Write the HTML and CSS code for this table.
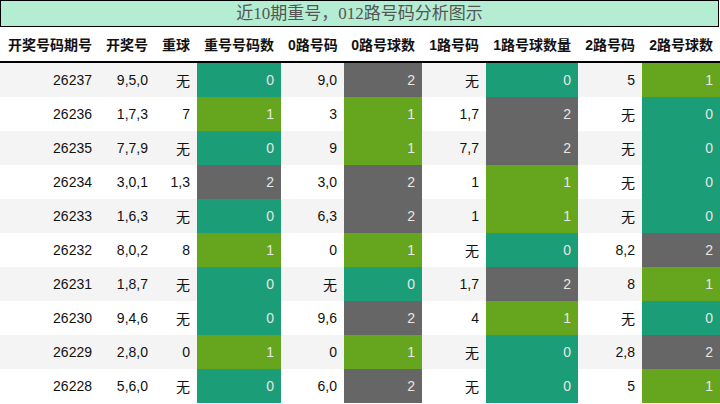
FILE: index.html
```html
<!DOCTYPE html>
<html lang="zh">
<head>
<meta charset="utf-8">
<title>近10期重号，012路号码分析图示</title>
<link rel="stylesheet" href="styles.css">
</head>
<body>
<div class="page">
  <div class="title">近10期重号，012路号码分析图示</div>
  <table class="grid">
    <colgroup>
      <col class="c1"><col class="c2"><col class="c3"><col class="c4"><col class="c5">
      <col class="c6"><col class="c7"><col class="c8"><col class="c9"><col class="c10">
    </colgroup>
    <thead>
      <tr>
        <th>开奖号码期号</th><th>开奖号</th><th>重球</th><th>重号号码数</th><th>0路号码</th>
        <th>0路号球数</th><th>1路号码</th><th>1路号球数量</th><th>2路号码</th><th>2路号球数</th>
      </tr>
    </thead>
    <tbody>
      <tr><td>26237</td><td>9,5,0</td><td>无</td><td class="k0">0</td><td>9,0</td><td class="k2">2</td><td>无</td><td class="k0">0</td><td>5</td><td class="k1">1</td></tr>
      <tr><td>26236</td><td>1,7,3</td><td>7</td><td class="k1">1</td><td>3</td><td class="k1">1</td><td>1,7</td><td class="k2">2</td><td>无</td><td class="k0">0</td></tr>
      <tr><td>26235</td><td>7,7,9</td><td>无</td><td class="k0">0</td><td>9</td><td class="k1">1</td><td>7,7</td><td class="k2">2</td><td>无</td><td class="k0">0</td></tr>
      <tr><td>26234</td><td>3,0,1</td><td>1,3</td><td class="k2">2</td><td>3,0</td><td class="k2">2</td><td>1</td><td class="k1">1</td><td>无</td><td class="k0">0</td></tr>
      <tr><td>26233</td><td>1,6,3</td><td>无</td><td class="k0">0</td><td>6,3</td><td class="k2">2</td><td>1</td><td class="k1">1</td><td>无</td><td class="k0">0</td></tr>
      <tr><td>26232</td><td>8,0,2</td><td>8</td><td class="k1">1</td><td>0</td><td class="k1">1</td><td>无</td><td class="k0">0</td><td>8,2</td><td class="k2">2</td></tr>
      <tr><td>26231</td><td>1,8,7</td><td>无</td><td class="k0">0</td><td>无</td><td class="k0">0</td><td>1,7</td><td class="k2">2</td><td>8</td><td class="k1">1</td></tr>
      <tr><td>26230</td><td>9,4,6</td><td>无</td><td class="k0">0</td><td>9,6</td><td class="k2">2</td><td>4</td><td class="k1">1</td><td>无</td><td class="k0">0</td></tr>
      <tr><td>26229</td><td>2,8,0</td><td>0</td><td class="k1">1</td><td>0</td><td class="k1">1</td><td>无</td><td class="k0">0</td><td>2,8</td><td class="k2">2</td></tr>
      <tr><td>26228</td><td>5,6,0</td><td>无</td><td class="k0">0</td><td>6,0</td><td class="k2">2</td><td>无</td><td class="k0">0</td><td>5</td><td class="k1">1</td></tr>
    </tbody>
  </table>
</div>
</body>
</html>
```
FILE: styles.css
```css
html, body {
  margin: 0;
  padding: 0;
  background: #ffffff;
}
.page {
  width: 720px;
  height: 404px;
  overflow: hidden;
  font-family: "Liberation Sans", "Noto Sans CJK SC", sans-serif;
  color: #111;
}
.title {
  box-sizing: border-box;
  width: 719px;
  height: 27px;
  border: 1px solid #000;
  background: #b4edd1;
  color: #555;
  font-family: "Liberation Serif", "Noto Sans CJK SC", serif;
  font-size: 17px;
  line-height: 25px;
  text-align: center;
}
.grid {
  width: 720px;
  table-layout: fixed;
  border-collapse: collapse;
  border-spacing: 0;
}
.c1 { width: 99px; }
.c2 { width: 56px; }
.c3 { width: 42px; }
.c4 { width: 84px; }
.c5 { width: 63px; }
.c6 { width: 78px; }
.c7 { width: 64px; }
.c8 { width: 92px; }
.c9 { width: 64px; }
.c10 { width: 78px; }
.grid th {
  height: 34px;
  padding: 0 7px;
  font-size: 14px;
  font-weight: bold;
  text-align: right;
  white-space: nowrap;
  color: #111;
  border-bottom: 2px solid #000;
}
.grid td {
  height: 34px;
  padding: 0 7px;
  font-size: 14px;
  text-align: right;
  white-space: nowrap;
  color: #111;
}
.grid tbody tr:nth-child(odd) td {
  background: #f4f4f4;
}
.grid tbody tr:nth-child(even) td {
  background: #ffffff;
}
.grid tbody tr td.k0 { background: #1b9e77; color: #e6e6e6; }
.grid tbody tr td.k1 { background: #66a61e; color: #e6e6e6; }
.grid tbody tr td.k2 { background: #666666; color: #e6e6e6; }
```
